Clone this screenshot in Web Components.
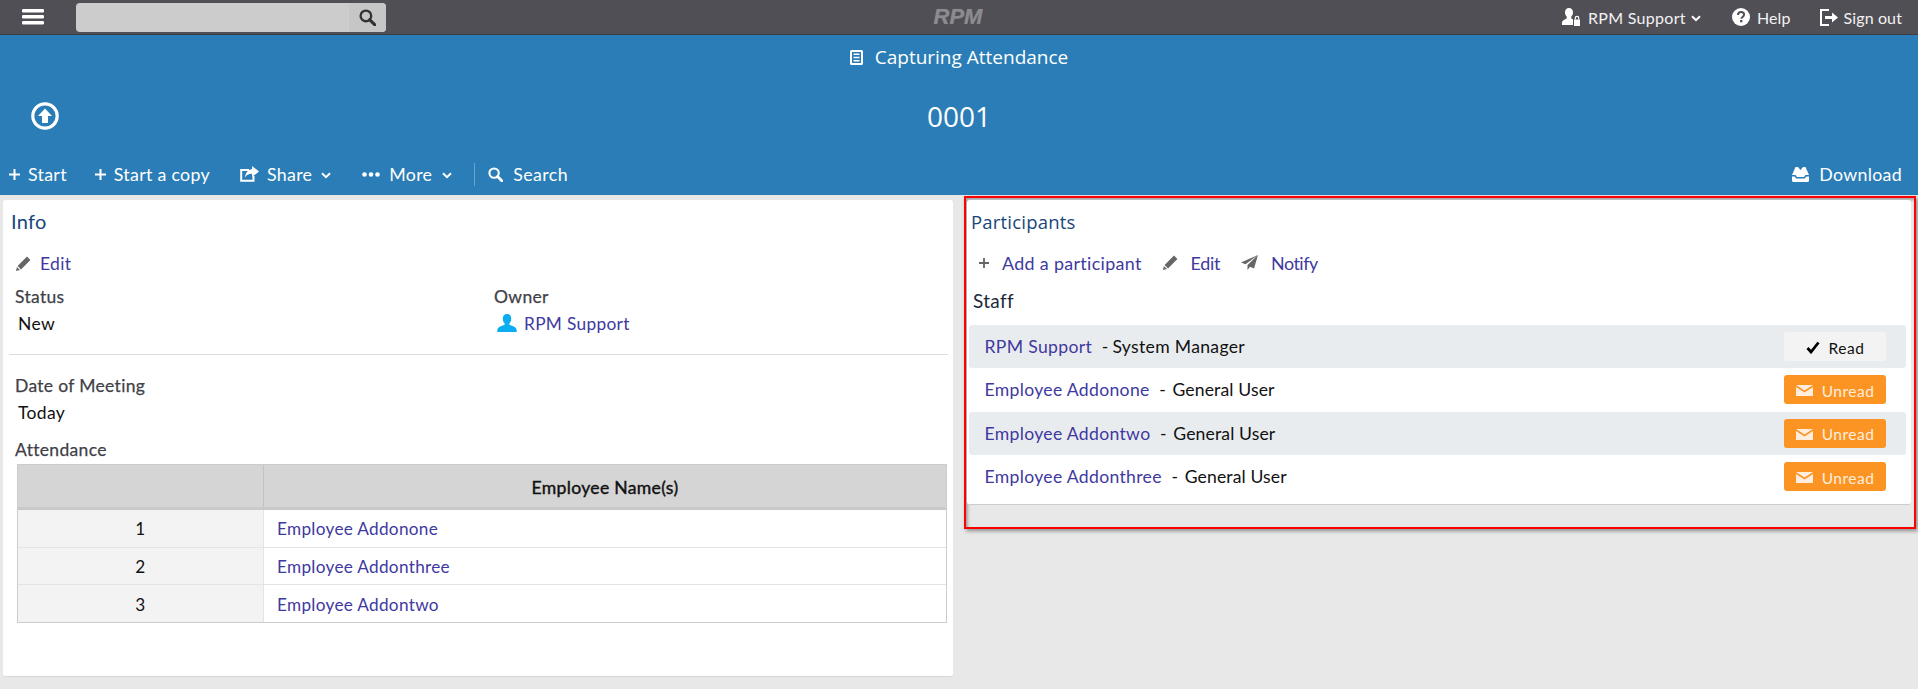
<!DOCTYPE html>
<html><head><meta charset="utf-8"><title>RPM</title>
<style>
html,body{margin:0;padding:0;height:689px;overflow:hidden;background:#e8e8e8;font-family:Lato,"Liberation Sans",sans-serif;font-size:17px;color:#111}
</style></head><body>
<rpm-app></rpm-app>
<script>
const I={
menu:(s=22)=>`<svg width="${s}" height="16" viewBox="0 0 22 16"><g fill="#fff"><rect y="0" width="22" height="3.4" rx="1.2"/><rect y="6" width="22" height="3.4" rx="1.2"/><rect y="12" width="22" height="3.4" rx="1.2"/></g></svg>`,
search:(s,c)=>`<svg width="${s}" height="${s}" viewBox="0 0 16 16"><circle cx="6.5" cy="6.5" r="5" fill="none" stroke="${c}" stroke-width="2.2"/><path d="M10.2 10.2 15 15" stroke="${c}" stroke-width="3" stroke-linecap="round"/></svg>`,
up:()=>`<svg width="28" height="28" viewBox="0 0 28 28"><circle cx="14" cy="14" r="12.2" fill="none" stroke="#fff" stroke-width="3.2"/><path d="M14 6.5 21 14h-4v7h-6v-7H7z" fill="#fff"/></svg>`,
doc:()=>`<svg width="13" height="15" viewBox="0 0 13 15"><path fill="#fff" fill-rule="evenodd" d="M1.500 0h10A1.500 1.500 0 0 1 13 1.500v12a1.500 1.500 0 0 1-1.500 1.500h-10A1.500 1.500 0 0 1 0 13.500v-12A1.500 1.500 0 0 1 1.500 0zM2 2v11h9V2zM3.500 3.500h6V5h-6zM3.500 6.700h6v1.500h-6zM3.500 9.900h6v1.500h-6z"/></svg>`,
plus:(c="#fff",s=11)=>`<svg width="${s}" height="${s}" viewBox="0 0 11 11"><path d="M5.500 0v11M0 5.500h11" stroke="${c}" stroke-width="2"/></svg>`,
share:()=>`<svg width="19" height="16" viewBox="0 0 19 16"><path d="M9 4H1.200v10.800h12.300V10" fill="none" stroke="#fff" stroke-width="2"/><path d="M12 0l7 5.500-7 5.500V7.800C8.500 7.800 6.500 9 5 11.500 5.200 7 8 3.500 12 3.200z" fill="#fff"/></svg>`,
chev:(c="#fff")=>`<svg width="10" height="7" viewBox="0 0 10 7"><path d="M1 1.200 5 5.200 9 1.200" fill="none" stroke="${c}" stroke-width="2"/></svg>`,
dots:()=>`<svg width="18" height="5" viewBox="0 0 18 5"><g fill="#fff"><circle cx="2.500" cy="2.500" r="2.300"/><circle cx="9" cy="2.500" r="2.300"/><circle cx="15.500" cy="2.500" r="2.300"/></g></svg>`,
userlock:()=>`<svg width="18" height="18" viewBox="0 0 18 18"><path fill="#fff" d="M7 0c2.500 0 4 1.800 4 4.300 0 1.700-.6 3.300-1.700 4.300v1.800c.6.300 1.200.6 1.700.9V17H0v-2.500c0-1.800 2.600-3 4.700-4V8.600C3.600 7.600 3 6 3 4.300 3 1.800 4.500 0 7 0z"/><path fill="#fff" d="M12 11.500h6V18h-6z"/><path d="M13.300 11.500V10a1.700 1.700 0 0 1 3.400 0v1.500" fill="none" stroke="#fff" stroke-width="1.200"/></svg>`,
help:()=>`<svg width="18" height="18" viewBox="0 0 18 18"><circle cx="9" cy="9" r="9" fill="#fff"/><path d="M6 7c0-1.800 1.300-3 3.100-3 1.700 0 3 1 3 2.600 0 2.300-2.700 2.300-2.700 4.100" fill="none" stroke="#514f56" stroke-width="2"/><rect x="8.100" y="12" width="2.300" height="2.300" fill="#514f56"/></svg>`,
signout:()=>`<svg width="18" height="17" viewBox="0 0 18 17"><path d="M9 1H1v15h8" fill="none" stroke="#fff" stroke-width="2"/><path d="M5 7h7V3.500l6 5-6 5V10H5z" fill="#fff"/></svg>`,
download:()=>`<svg width="17" height="15" viewBox="0 0 17 15"><path fill="#fff" d="M3.500 0H6l2.500 3L11 0h2.500L17 8h-3.500l-1.500 2H5L3.500 8H0z"/><path fill="#fff" d="M0 9.500h2.700l1.500 2h8.600l1.500-2H17v4A1.500 1.500 0 0 1 15.500 15h-14A1.500 1.500 0 0 1 0 13.500z"/></svg>`,
pencil:()=>`<svg width="15" height="15" viewBox="0 0 15 15"><path fill="#666" d="M11 .6l3.400 3.400L5 13.400 1.600 10zM.9 11l3.100 3.100-4 .9z"/></svg>`,
person:()=>`<svg width="20" height="18" viewBox="0 0 20 18"><path fill="#0aaef0" d="M10 0c2.700 0 4.200 2 4.200 4.700 0 1.900-.7 3.600-1.800 4.600v1.500c2.600 1 6.600 2.300 7.100 4.400.2.800.2 1.800.2 2.800H.3c0-1 0-2 .2-2.800.5-2.100 4.500-3.400 7.100-4.400V9.300C6.500 8.300 5.800 6.600 5.800 4.700 5.800 2 7.300 0 10 0z"/></svg>`,
plane:()=>`<svg width="17" height="15" viewBox="0 0 17 15"><path fill="#666" d="M17 0 0 7.500l4.500 1.800L17 0zM17 0 6.500 10v5l2.500-3.300 4 1.800z"/></svg>`,
check:()=>`<svg width="14" height="13" viewBox="0 0 14 13"><path d="M1.500 7 5 11 12.500 1.500" fill="none" stroke="#000" stroke-width="2.800"/></svg>`,
mail:()=>`<svg width="17" height="11" viewBox="0 0 17 11"><path fill="#ffeedd" d="M0 0h17L8.500 5.500zM0 2v9h17V2L8.500 7.500z"/></svg>`
};
function def(name,css,html){
  customElements.define(name,class extends HTMLElement{
    constructor(){super();const r=this.attachShadow({mode:"open"});
      r.innerHTML=`<style>${css}</style>`+(typeof html==="function"?html(this):html);}
  });
}
const LS="letter-spacing:.32px;";

def("top-bar",`:host{display:grid;grid-template-columns:1fr auto 1fr;align-items:center;height:35px;box-sizing:border-box;border-bottom:1px solid #3c3b40;background:#514f56;color:#f2f2f2;letter-spacing:.12px;font-size:16px}
.l{display:flex;align-items:center}
.m{margin-left:22px;display:flex}
.s{margin-left:32px;width:310px;height:29px;background:#ccc;border-radius:4px;display:flex;justify-content:flex-end;overflow:hidden}
.s i{width:37px;background:#c6c6c6;display:flex;align-items:center;justify-content:center}
.logo{font:italic bold 22px "Liberation Sans",sans-serif;color:#8c8c90;letter-spacing:0;margin-right:2px;text-shadow:0 0 1px #77777b}
.a{display:flex;align-items:center;justify-content:flex-end;margin-right:16px}
.a span{display:flex;align-items:center}`,
`<div class="l"><div class="m">${I.menu()}</div><div class="s"><i>${I.search(17,"#333")}</i></div></div>
<div class="logo">RPM</div>
<div class="a"><span style="margin-right:8px">${I.userlock()}</span><span style="letter-spacing:.3px">RPM Support</span><span style="margin:2px 31px 0 5px">${I.chev()}</span><span style="margin-right:7px">${I.help()}</span><span>Help</span><span style="margin:0 6px 0 29px">${I.signout()}</span><span>Sign out</span></div>`);

def("tool-btn",`:host{display:inline-flex;align-items:center;color:#fff;gap:var(--g,8px);font-size:17.800px;letter-spacing:.3px}`,`<slot name="i"></slot><slot></slot>`);

def("record-head",`:host{display:block;background:#2a7db6;height:160px;color:#fff;box-sizing:border-box}
.t{height:44px;display:flex;align-items:center;justify-content:center;gap:12px;font:19px "Open Sans",sans-serif}
.n{height:74px;display:grid;grid-template-columns:1fr auto 1fr;align-items:center;font:28px "Open Sans",sans-serif}
.n div:first-child{padding-left:31px;display:flex}
.b{height:42px;display:flex;align-items:center;padding:0 16px 0 9px;box-sizing:border-box}
.b tool-btn+tool-btn{margin-left:30px}
.b tool-btn.second{margin-left:28px}
.b tool-btn.more{margin-left:31px}
.d{width:1px;height:23px;background:#6da3ca;margin:0 13px 0 22px}
.sp{flex:1}
svg{display:block}
span[slot=i]{display:flex}
.c{margin-left:1px;display:flex;margin-top:3px}`,
`<div class="t">${I.doc()}<span>Capturing Attendance</span></div>
<div class="n"><div>${I.up()}</div><span>0001</span><div></div></div>
<div class="b">
<tool-btn><span slot="i">${I.plus()}</span>Start</tool-btn>
<tool-btn class="second"><span slot="i">${I.plus()}</span>Start a copy</tool-btn>
<tool-btn style="--g:8px"><span slot="i">${I.share()}</span>Share<span class="c">${I.chev()}</span></tool-btn>
<tool-btn class="more" style="--g:9px"><span slot="i">${I.dots()}</span>More<span class="c">${I.chev()}</span></tool-btn>
<div class="d"></div>
<tool-btn style="--g:10px;margin:0;letter-spacing:.4px"><span slot="i">${I.search(15,"#fff")}</span>Search</tool-btn>
<div class="sp"></div>
<tool-btn style="--g:10px"><span slot="i">${I.download()}</span>Download</tool-btn>
</div>`);

const link="color:#40399f;";
def("info-card",`:host{display:block;background:#fff;height:477px;border-radius:3px;border-bottom:1px solid #d5d5d5;box-sizing:border-box;${LS}font-size:17.500px}
.h{height:41px;display:flex;align-items:center;padding-left:8px;font-size:20px;color:#17467a}
.e{height:43px;padding-top:2px;box-sizing:border-box;display:flex;align-items:center;padding-left:13px;gap:9px;${link}}
.g{display:grid;grid-template-columns:479px 1fr;padding-left:12px}
.l{height:24px;display:flex;align-items:center;color:#3f3f48;-webkit-text-stroke:.25px #3f3f48}
.v{height:30px;display:flex;align-items:center;padding-left:3px;color:#111}
.o{${link}gap:7px;font-size:17.300px}
hr{border:0;border-top:1px solid #ddd;margin:16px 5px 0 6px;height:0}
.d{padding:17px 0 0 12px}
.d .l{height:26px}
.d .v{height:28px}
.d .at{height:24px;margin-top:11px}`,
`<div class="h">Info</div>
<div class="e">${I.pencil()}<span>Edit</span></div>
<div class="g"><div class="l">Status</div><div class="l">Owner</div><div class="v">New</div><div class="v o">${I.person()}<span>RPM Support</span></div></div>
<hr>
<div class="d"><div class="l">Date of Meeting</div><div class="v">Today</div><div class="l at">Attendance</div></div>
<data-table></data-table>`);

def("data-table",`:host{display:block;margin:3px 6px 0 14px;border:1px solid #ccc;border-top:0;box-sizing:border-box;height:159px;font-size:17.200px;letter-spacing:.3px}
.r{display:grid;grid-template-columns:246px 1fr;height:37.500px;border-bottom:1px solid #e4e4e4;box-sizing:border-box}
.r:last-child{border-bottom:0;height:37px}
.r>div{display:flex;align-items:center;padding-top:1px;box-sizing:border-box}
.n{background:#f3f3f3;justify-content:center;border-right:1px solid #e4e4e4}
.r>.k{padding-left:13px;color:#40399f}
.hd{height:46px;background:#d5d5d5;border-bottom:3px solid #c9c9c9;border-top:1px solid #ccc}
.hd div:first-child{border-right:1px solid #c2c2c2}
.r.hd div:last-child{justify-content:center;color:#111;-webkit-text-stroke:.4px #111;font-size:17.600px;padding-top:3px}`,
`<div class="r hd"><div></div><div>Employee Name(s)</div></div>
<div class="r"><div class="n">1</div><div class="k">Employee Addonone</div></div>
<div class="r"><div class="n">2</div><div class="k">Employee Addonthree</div></div>
<div class="r"><div class="n">3</div><div class="k">Employee Addontwo</div></div>`);

def("read-badge",`:host{display:flex;align-items:center;justify-content:center;width:102px;height:29px;padding-top:2px;box-sizing:border-box;border-radius:3px;background:var(--b);color:var(--c);font-size:15.500px;letter-spacing:.5px;gap:9px}`,`<slot name="i"></slot><slot></slot>`);

def("person-row",`:host{display:flex;align-items:center;height:43.330px;padding:0 20px 0 15.500px;box-sizing:border-box;font-size:17.600px;letter-spacing:.32px;border-radius:3px;background:var(--rb,transparent)}
a{color:#40399f}
.x{flex:1;color:#111;white-space:pre}
.x span{margin-left:var(--rm,1.500px);letter-spacing:var(--rl,.12px)}`,
(h)=>`<div class="x"><a>${h.getAttribute("name")}</a>  - <span>${h.getAttribute("role")}</span></div><slot></slot>`);

def("participants-panel",`:host{display:block;height:333px;border:2px solid #f00;box-sizing:border-box;padding:2px 3px 0 1px;box-shadow:2px 2px 4px rgba(0,0,0,.4),inset 2px 2px 3px rgba(0,0,0,.3);background:#e8e8e8;${LS}}
.c{background:#fff;height:305px;border-bottom:1px solid #ccc;box-sizing:border-box;border-radius:3px;padding-left:2px}
.h{height:43px;display:flex;align-items:center;padding-left:2px;font:18.500px "Open Sans",sans-serif;color:#17467a;letter-spacing:.2px}
.a{height:39px;display:flex;align-items:center;padding-left:10px;color:#40399f;font-size:17.900px}
.a svg{margin-right:13px;flex:none}
.a svg+span{margin-right:21px}
.s{height:36px;display:flex;align-items:center;padding-left:4px;font-size:19px;color:#1a2a3a}
.rows{margin:7px 5px 0 0}`,
`<div class="c"><div class="h">Participants</div>
<div class="a">${I.plus("#666",10)}<span>Add a participant</span>${I.pencil()}<span style="letter-spacing:-.3px">Edit</span>${I.plane()}<span style="letter-spacing:-.5px">Notify</span></div>
<div class="s">Staff</div>
<div class="rows">
<person-row name="RPM Support" role="System Manager" style="--rb:#e9ecef;--rm:-1px;--rl:.32px"><read-badge style="--b:#f3f3f3;--c:#111"><span slot="i" style="display:flex">${I.check()}</span>Read</read-badge></person-row>
<person-row name="Employee Addonone" role="General User"><read-badge style="--b:#fc9424;--c:#ffeedd"><span slot="i" style="display:flex">${I.mail()}</span>Unread</read-badge></person-row>
<person-row name="Employee Addontwo" role="General User" style="--rb:#e9ecef"><read-badge style="--b:#fc9424;--c:#ffeedd"><span slot="i" style="display:flex">${I.mail()}</span>Unread</read-badge></person-row>
<person-row name="Employee Addonthree" role="General User"><read-badge style="--b:#fc9424;--c:#ffeedd"><span slot="i" style="display:flex">${I.mail()}</span>Unread</read-badge></person-row>
</div></div>`);

def("rpm-app",`:host{display:block}
.m{display:grid;grid-template-columns:950px 952px;column-gap:11px;padding:1px 0 0 3px;align-items:start}
info-card{margin-top:4px}`,
`<top-bar></top-bar><record-head></record-head><div class="m"><info-card></info-card><participants-panel></participants-panel></div>`);
</script>
</body></html>
